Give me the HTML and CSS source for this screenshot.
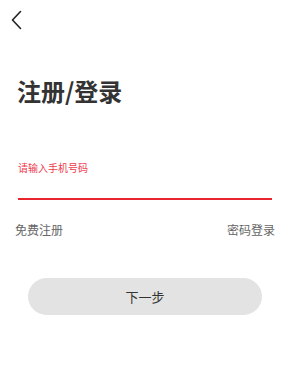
FILE: index.html
```html
<!DOCTYPE html>
<html lang="zh-CN">
<head>
  <meta charset="UTF-8">
  <title>注册/登录</title>
  <link rel="stylesheet" href="styles.css">
</head>
<body>
  <div class="page">
    <div class="topbar">
      <a href="#" class="back">
        <svg width="12" height="20" viewBox="0 0 12 20">
          <path d="M10.5 1.5 L2.5 10 L10.5 18.5" fill="none" stroke="#222" stroke-width="1.6" stroke-linecap="round" stroke-linejoin="round"/>
        </svg>
      </a>
    </div>
    <h1 class="title">注册/登录</h1>
    <div class="field">
      <label class="field_label">请输入手机号码</label>
      <input class="field_input" type="tel">
    </div>
    <div class="links">
      <a href="#">免费注册</a>
      <a href="#">密码登录</a>
    </div>
    <div class="actions">
      <button class="btn-next">下一步</button>
    </div>
  </div>
</body>
</html>
```

FILE: styles.css
```css
body {
  margin: 0;
  background: #fff;
  font-family: "Noto Sans CJK SC", "Noto Sans", sans-serif;
  color: #333;
}

.page {
  padding: 0 28px 0 18px;
}

.topbar {
  height: 60px;
  padding-top: 10px;
  margin-left: -8px;
  box-sizing: border-box;
}
.back {
  display: inline-block;
}
.back svg {
  display: block;
}

.title {
  margin: 14px 0 0 -1px;
  font-size: 24px;
  line-height: 34px;
  font-weight: bold;
  color: #333;
}

.field {
  margin-top: 53px;
}
.field_label {
  display: block;
  font-size: 10px;
  line-height: 14px;
  color: #ee3b4c;
}
.field_input {
  display: block;
  width: 100%;
  height: 23px;
  border: none;
  border-bottom: 2px solid #e8242f;
  outline: none;
  padding: 0;
  background: transparent;
}

.links {
  display: flex;
  justify-content: space-between;
  margin: 21px 0 0 -3px;
  width: 260px;
}
.links a {
  font-size: 12px;
  line-height: 18px;
  color: #666;
  text-decoration: none;
}

.actions {
  margin: 39px 0 0 10px;
}
.btn-next {
  display: block;
  width: 234px;
  height: 37px;
  border: none;
  border-radius: 19px;
  background: #e3e3e3;
  font-family: inherit;
  font-size: 13px;
  color: #333;
}
```
